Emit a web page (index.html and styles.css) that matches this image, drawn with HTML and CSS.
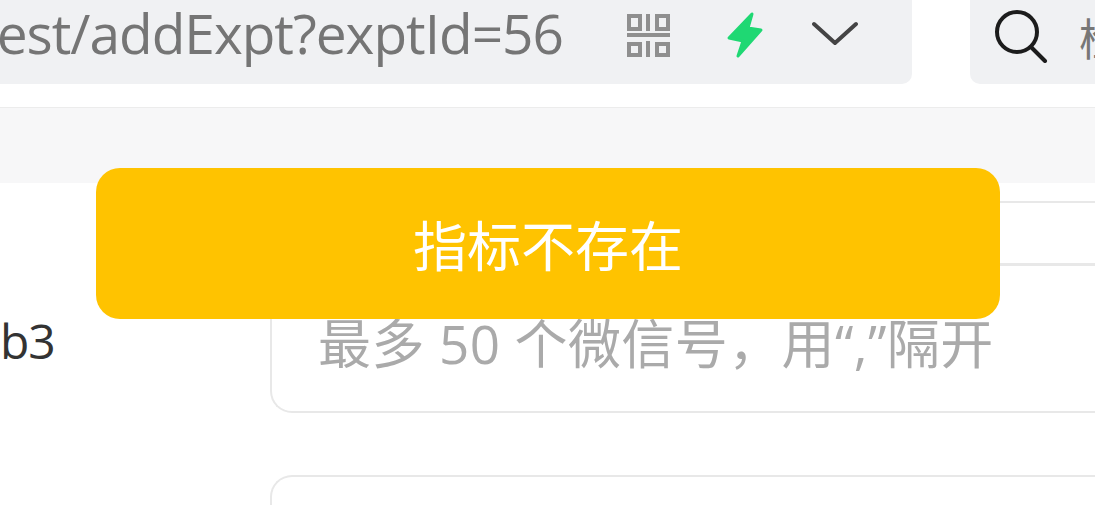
FILE: index.html
```html
<!DOCTYPE html>
<html lang="zh-CN">
  <head>
    <meta charset="UTF-8" />
    <title>addExpt</title>
    <link rel="stylesheet" href="styles.css">
  </head>
  <body>
    <header class="topbar">
      <div class="urlbar">
        <span class="url">est/addExpt?exptId=56</span>
        <svg class="icon-qr" width="44" height="44" viewBox="0 0 44 44" fill="none" stroke="#8f8f8f" stroke-width="4">
          <rect x="3" y="3" width="11" height="13" />
          <rect x="31" y="3" width="11" height="13" />
          <path d="M22 1v17M1 22h43M22 28v16" />
          <rect x="3" y="31" width="11" height="11" />
          <rect x="31" y="31" width="11" height="11" />
        </svg>
        <svg class="icon-bolt" width="38" height="48" viewBox="0 0 38 48">
          <path d="M26 3 L3 27 L17 30 L12 45 L35 19 L22 17 Z" fill="#1fd873" stroke="#1fd873" stroke-width="3" stroke-linejoin="round" />
        </svg>
        <svg class="icon-chevron" width="46" height="26" viewBox="0 0 46 26" fill="none" stroke="#444" stroke-width="4" stroke-linecap="round" stroke-linejoin="round">
          <path d="M2 3 L23 22 L44 3" />
        </svg>
      </div>
      <div class="searchbar">
        <svg width="56" height="54" viewBox="0 0 56 54" fill="none" stroke="#1c1c1c" stroke-width="4" stroke-linecap="round">
          <circle cx="24" cy="23" r="20" />
          <path d="M38 38 L52 52" />
        </svg>
        <span class="search-text">检索</span>
      </div>
    </header>

    <div class="band"></div>

    <main class="form">
      <div class="form-row">
        <span class="value"></span>
        <div class="field field-top"></div>
      </div>
      <div class="form-row">
        <span class="value">b3</span>
        <div class="field field-main">最多 50 个微信号，用“,”隔开</div>
      </div>
      <div class="form-row">
        <span class="value"></span>
        <div class="field field-next"></div>
      </div>
    </main>

    <div class="toast">指标不存在</div>
  </body>
</html>
```

FILE: styles.css
```css
html,
body {
  margin: 0;
  height: 506px;
  overflow: hidden;
}

body {
  font-family: "Open Sans", "Noto Sans CJK SC", sans-serif;
  background-color: #fff;
  position: relative;
}

.topbar {
  display: flex;
  height: 84px;
  gap: 58px;
}

.urlbar {
  width: 912px;
  flex: none;
  background-color: #f0f1f3;
  border-bottom-right-radius: 10px;
  display: flex;
  align-items: center;
  justify-content: flex-end;
  overflow: hidden;
  white-space: nowrap;
}

.urlbar > * {
  flex: none;
}

.url {
  font-size: 55px;
  line-height: 1;
  letter-spacing: -1px;
  color: #757575;
  margin-right: 63px;
  margin-top: -20px;
}

.icon-qr {
  margin-right: 56px;
  margin-top: -14px;
}

.icon-bolt {
  margin-right: 48px;
  margin-top: -14px;
}

.icon-chevron {
  margin-right: 54px;
  margin-top: -16px;
}

.searchbar {
  flex: 1;
  background-color: #f0f1f3;
  border-bottom-left-radius: 10px;
  display: flex;
  align-items: center;
  padding-left: 23px;
  gap: 30px;
  overflow: hidden;
  white-space: nowrap;
}

.searchbar svg {
  flex: none;
  margin-top: -13px;
}

.search-text {
  font-size: 44px;
  color: #777;
  margin-top: -10px;
}

.band {
  margin-top: 23px;
  height: 75px;
  background-color: #f7f7f8;
  border-top: 1px solid #ececec;
}

.form {
  display: flex;
  flex-direction: column;
  height: 323px;
}

.form-row {
  display: flex;
  align-items: center;
}

.value {
  width: 270px;
  flex: none;
  font-size: 48px;
  letter-spacing: -1px;
  color: #333;
  margin-top: 2px;
}

.field {
  flex: 1;
  box-sizing: border-box;
  border: 2px solid #e8e8e8;
  border-right: none;
  border-radius: 22px 0 0 22px;
  background-color: #fff;
}

.field-top {
  height: 64px;
  margin-top: 18px;
}

.field-main {
  height: 149px;
  margin-top: -1px;
  border-radius: 0 0 0 22px;
  padding: 46px 46px 0;
  font-size: 53px;
  letter-spacing: 0.4px;
  line-height: 64px;
  color: #aaa;
  white-space: nowrap;
}

.field-next {
  height: 30px;
  margin-top: 62px;
  border-bottom: none;
  border-radius: 22px 0 0 0;
}

.toast {
  position: absolute;
  left: 96px;
  top: 168px;
  width: 904px;
  height: 151px;
  border-radius: 24px;
  background-color: #ffc300;
  color: #fff;
  font-size: 54px;
  display: flex;
  align-items: center;
  justify-content: center;
}
```
